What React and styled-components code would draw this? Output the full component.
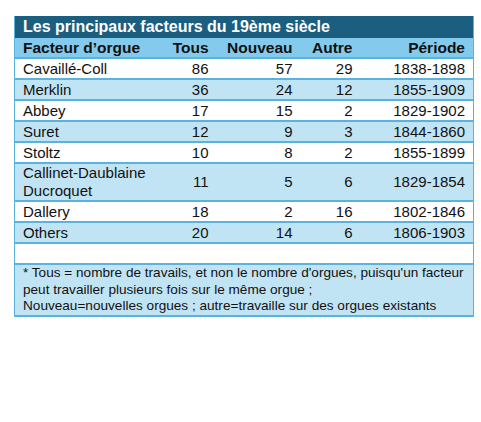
import React from "react";
import styled, { createGlobalStyle } from "styled-components";

const GlobalStyle = createGlobalStyle`
  body {
    margin: 0;
    background: #ffffff;
    font-family: "Liberation Sans", Arial, sans-serif;
  }
`;

const Page = styled.div`
  padding: 16px 0 0 14px;
`;

const Table = styled.table`
  width: 460px;
  border-collapse: collapse;
  table-layout: fixed;
  border-left: 1px solid #5ab2df;
  border-right: 1px solid #5ab2df;
  font-size: 15px;
  color: #111;
`;

const TitleCell = styled.th`
  background: #1b5e80;
  color: #ffffff;
  font-size: 16px;
  font-weight: bold;
  text-align: left;
  height: 22px;
  padding: 0 8px;
`;

const HeadCell = styled.th`
  background: #84caec;
  font-weight: bold;
  font-size: 15.5px;
  height: 19px;
  padding: 0 ${({ $pr }) => $pr || 6}px 0 8px;
  text-align: ${({ $left }) => ($left ? "left" : "right")};
  border-bottom: 2px solid #5ab2df;
`;

const Row = styled.tr`
  background: ${({ $alt }) => ($alt ? "#c1e4f5" : "#ffffff")};
`;

const Cell = styled.td`
  height: ${({ $tall }) => ($tall ? 36 : 19)}px;
  padding: 0 ${({ $pr }) => $pr || 6}px 0 8px;
  text-align: ${({ $left }) => ($left ? "left" : "right")};
  line-height: 18px;
  border-bottom: 2px solid #5ab2df;
  vertical-align: middle;
`;

const NoteCell = styled.td`
  background: #c1e4f5;
  font-size: 13.6px;
  line-height: 16.5px;
  padding: 0 8px;
  border-bottom: 2px solid #5ab2df;
`;

const rows = [
  ["Cavaillé-Coll", 86, 57, 29, "1838-1898"],
  ["Merklin", 36, 24, 12, "1855-1909"],
  ["Abbey", 17, 15, 2, "1829-1902"],
  ["Suret", 12, 9, 3, "1844-1860"],
  ["Stoltz", 10, 8, 2, "1855-1899"],
  ["Callinet-Daublaine Ducroquet", 11, 5, 6, "1829-1854", true],
  ["Dallery", 18, 2, 16, "1802-1846"],
  ["Others", 20, 14, 6, "1806-1903"],
];

export default function App() {
  return (
    <Page>
      <GlobalStyle />
      <Table>
        <colgroup>
          <col style={{ width: 140 }} />
          <col style={{ width: 60 }} />
          <col style={{ width: 84 }} />
          <col style={{ width: 60 }} />
          <col />
        </colgroup>
        <thead>
          <tr>
            <TitleCell colSpan={5}>Les principaux facteurs du 19ème siècle</TitleCell>
          </tr>
          <tr>
            <HeadCell $left>Facteur d’orgue</HeadCell>
            <HeadCell>Tous</HeadCell>
            <HeadCell>Nouveau</HeadCell>
            <HeadCell>Autre</HeadCell>
            <HeadCell $pr={8}>Période</HeadCell>
          </tr>
        </thead>
        <tbody>
          {rows.map(([name, tous, nouveau, autre, periode, tall], i) => (
            <Row key={name} $alt={i % 2 === 1}>
              <Cell $left $tall={tall}>{name}</Cell>
              <Cell>{tous}</Cell>
              <Cell>{nouveau}</Cell>
              <Cell>{autre}</Cell>
              <Cell $pr={8}>{periode}</Cell>
            </Row>
          ))}
          <Row>
            <Cell colSpan={5} />
          </Row>
          <tr>
            <NoteCell colSpan={5}>
              * Tous = nombre de travails, et non le nombre d'orgues, puisqu'un facteur
              peut travailler plusieurs fois sur le même orgue ;
              <br />
              Nouveau=nouvelles orgues ; autre=travaille sur des orgues existants
            </NoteCell>
          </tr>
        </tbody>
      </Table>
    </Page>
  );
}
